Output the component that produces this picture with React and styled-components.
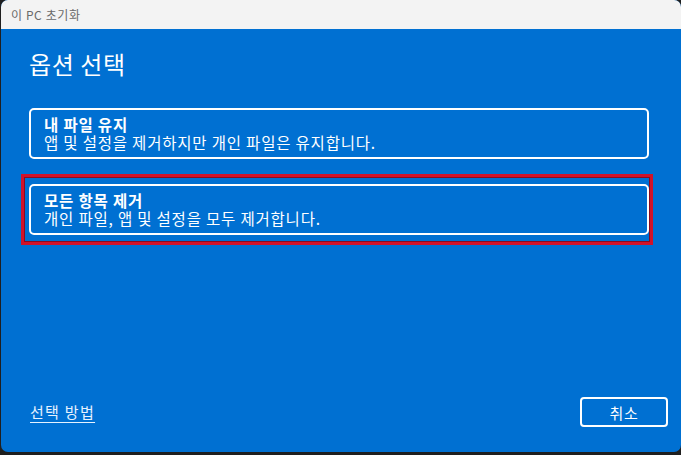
import React from 'react';
import styled, { createGlobalStyle } from 'styled-components';

const GlobalStyle = createGlobalStyle`
  html, body {
    margin: 0;
    padding: 0;
    background: #1f1f1f;
  }
  body {
    font-family: "Noto Sans CJK KR", "Noto Sans", sans-serif;
    overflow: hidden;
  }
`;

const Window = styled.div`
  width: 680px;
  height: 452px;
  margin-left: 1px;
  border-radius: 7px;
  overflow: hidden;
  display: flex;
  flex-direction: column;
  background: #0070d2;
`;

const TitleBar = styled.div`
  height: 29px;
  flex: none;
  display: flex;
  align-items: center;
  padding-left: 10px;
  background: #f3f3f3;
  color: #6a6a6a;
  font-size: 12px;
  letter-spacing: 0.6px;
`;

const Content = styled.div`
  flex: 1;
  display: flex;
  flex-direction: column;
  padding: 20px 32px 25px 28px;
  color: #ffffff;
`;

const Heading = styled.h1`
  margin: 0;
  font-size: 24px;
  font-weight: 400;
  line-height: 29px;
  letter-spacing: 0.6px;
`;

const Options = styled.div`
  display: flex;
  flex-direction: column;
  gap: 25px;
  margin-top: 30px;
`;

const OptionCard = styled.div`
  position: relative;
  border: 2px solid #ffffff;
  border-radius: 5px;
  padding: 5px 13px 6px;
  line-height: 18px;
  font-size: 15.5px;
  letter-spacing: 0.8px;

  ${({ $highlight }) =>
    $highlight &&
    `
    &::after {
      content: '';
      position: absolute;
      left: -10px;
      top: -12px;
      right: -6px;
      bottom: -12px;
      border: 3.5px solid #d0122a;
      box-shadow: inset 0 0 0 1px #8a0a20;
      pointer-events: none;
    }
  `}
`;

const OptionTitle = styled.div`
  font-weight: 700;
`;

const OptionText = styled.div`
  font-weight: 400;
`;

const Spacer = styled.div`
  flex: 1;
`;

const Footer = styled.div`
  display: flex;
  align-items: center;
  justify-content: space-between;
`;

const HelpLink = styled.a`
  color: #e6f2ff;
  font-size: 15px;
  letter-spacing: 1.3px;
  text-decoration: underline;
  text-underline-offset: 4px;
  margin-left: 1px;
  margin-bottom: 2px;
`;

const CancelButton = styled.button`
  width: 88px;
  height: 30px;
  margin-right: -19px;
  border: 2px solid #ffffff;
  border-radius: 4px;
  background: transparent;
  color: #ffffff;
  font-family: inherit;
  font-size: 15px;
  letter-spacing: 0.8px;
  padding: 0;
`;

const options = [
  { title: '내 파일 유지', text: '앱 및 설정을 제거하지만 개인 파일은 유지합니다.' },
  { title: '모든 항목 제거', text: '개인 파일, 앱 및 설정을 모두 제거합니다.', highlight: true },
];

export default function App() {
  return (
    <>
      <GlobalStyle />
      <Window>
        <TitleBar>이 PC 초기화</TitleBar>
        <Content>
          <Heading>옵션 선택</Heading>
          <Options>
            {options.map((o) => (
              <OptionCard key={o.title} $highlight={o.highlight}>
                <OptionTitle>{o.title}</OptionTitle>
                <OptionText>{o.text}</OptionText>
              </OptionCard>
            ))}
          </Options>
          <Spacer />
          <Footer>
            <HelpLink href="#">선택 방법</HelpLink>
            <CancelButton>취소</CancelButton>
          </Footer>
        </Content>
      </Window>
    </>
  );
}
